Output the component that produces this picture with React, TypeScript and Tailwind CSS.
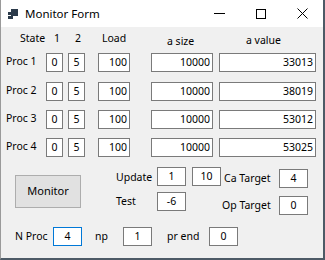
import React from 'react';

const font = { fontFamily: '"Noto Sans", "Open Sans", sans-serif' };

interface BoxProps {
  value: string;
  className: string;
  align?: 'center' | 'right';
  focused?: boolean;
}

const Box: React.FC<BoxProps> = ({ value, className, align = 'center', focused }) => (
  <div
    className={`shrink-0 h-[19px] bg-white border text-[10.5px] leading-[17px] text-black ${
      focused ? 'border-[#0078d7]' : 'border-[#7a7a7a]'
    } ${align === 'right' ? 'text-right pr-[2px]' : 'text-center'} ${className}`}
  >
    {value}
  </div>
);

const procRows = [
  { name: 'Proc 1', value: '33013', mt: 'mt-[7px]' },
  { name: 'Proc 2', value: '38019', mt: 'mt-[10px]' },
  { name: 'Proc 3', value: '53012', mt: 'mt-[9px]' },
  { name: 'Proc 4', value: '53025', mt: 'mt-[9px]' },
];

export default function App() {
  return (
    <div
      className="w-[325px] h-[260px] flex flex-col bg-[#f0f0f0] border-l border-[#9a9a9a] border-r-2 border-b-2 border-r-[#4d5a66] border-b-[#4d5a66] text-black text-[10.5px] overflow-hidden"
      style={font}
    >
      {/* title bar */}
      <div className="h-[27px] shrink-0 bg-white flex items-center">
        <svg width="10" height="10" viewBox="0 0 10 10" className="ml-[7px] mt-[1px]">
          <rect x="3" y="0" width="7" height="7" fill="#2b3a4a" />
          <rect x="0" y="3" width="3" height="3" fill="#2b3a4a" />
          <rect x="0" y="7" width="5" height="3" fill="#2b3a4a" />
        </svg>
        <span className="ml-[7px] text-[11.5px]">Monitor Form</span>
        <div className="ml-auto flex items-center h-full">
          <div className="w-[42px] h-full flex items-center justify-center">
            <div className="w-[11px] h-px bg-black" />
          </div>
          <div className="w-[42px] h-full flex items-center justify-center">
            <div className="w-[10px] h-[10px] border border-black" />
          </div>
          <div className="w-[41px] h-full flex items-center justify-center">
            <svg width="11" height="11" viewBox="0 0 11 11">
              <path d="M0.5 0.5 L10.5 10.5 M10.5 0.5 L0.5 10.5" stroke="#000" strokeWidth="1" />
            </svg>
          </div>
        </div>
      </div>

      {/* header labels */}
      <div className="flex items-start h-[16px] mt-[3px] leading-[16px]">
        <span className="ml-[19px] w-[34px]">State</span>
        <span className="w-[21px]">1</span>
        <span className="w-[27px]">2</span>
        <span className="w-[65px]">Load</span>
        <span className="w-[79px] mt-[3px]">a size</span>
        <span className="mt-[2px]">a value</span>
      </div>

      {/* process rows */}
      {procRows.map((row) => (
        <div key={row.name} className={`flex items-center ${row.mt}`}>
          <span className="ml-[5px] w-[40px] -mt-[2px]">{row.name}</span>
          <Box value="0" className="w-[17px]" />
          <Box value="5" className="w-[17px] ml-[5px]" />
          <Box value="100" align="right" className="w-[32px] ml-[13px]" />
          <Box value="10000" align="right" className="w-[62px] ml-[21px]" />
          <Box value={row.value} align="right" className="w-[97px] ml-[6px]" />
        </div>
      ))}

      {/* controls */}
      <div className="flex items-start mt-[10px]">
        <button className="shrink-0 ml-[14px] mt-[8px] w-[66px] h-[33px] bg-[#e1e1e1] border border-[#adadad] text-[11px]">
          Monitor
        </button>
        <div className="ml-[35px] flex flex-col">
          <div className="flex items-center">
            <span className="w-[41px] mt-[2px]">Update</span>
            <Box value="1" className="w-[29px]" />
            <Box value="10" className="w-[29px] ml-[6px] -mt-[1px]" />
          </div>
          <div className="flex items-center mt-[6px]">
            <span className="w-[41px]">Test</span>
            <Box value="-6" className="w-[29px]" />
          </div>
        </div>
        <div className="flex flex-col ml-[3px]">
          <div className="flex items-center mt-[2px]">
            <span className="w-[55px]">Ca Target</span>
            <Box value="4" className="w-[29px]" />
          </div>
          <div className="flex items-center mt-[8px] -ml-[2px]">
            <span className="w-[57px]">Op Target</span>
            <Box value="0" className="w-[29px]" />
          </div>
        </div>
      </div>

      {/* bottom row */}
      <div className="flex items-center mt-[12px]">
        <span className="ml-[14px] w-[38px]">N Proc</span>
        <Box value="4" focused className="w-[29px]" />
        <span className="ml-[13px] w-[28px]">np</span>
        <Box value="1" className="w-[29px]" />
        <span className="ml-[15px] w-[42px]">pr end</span>
        <Box value="0" className="w-[29px]" />
      </div>
    </div>
  );
}
